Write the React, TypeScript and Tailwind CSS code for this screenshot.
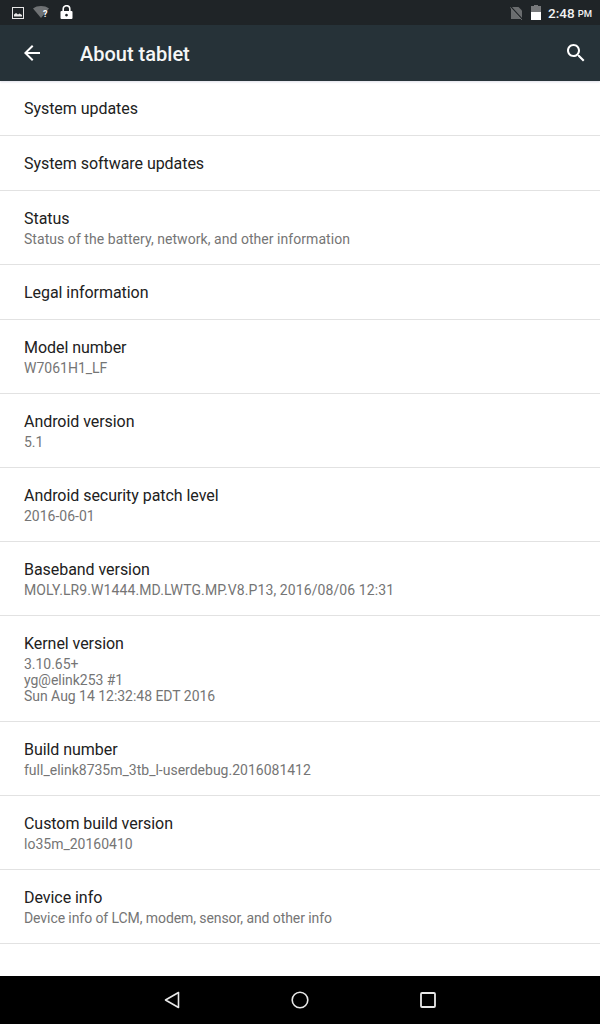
import React from 'react';

const rows: { title: string; sub?: string[]; subClass?: string }[] = [
  { title: 'System updates' },
  { title: 'System software updates' },
  { title: 'Status', sub: ['Status of the battery, network, and other information'], subClass: 'tracking-[0.05px]' },
  { title: 'Legal information' },
  { title: 'Model number', sub: ['W7061H1_LF'] },
  { title: 'Android version', sub: ['5.1'] },
  { title: 'Android security patch level', sub: ['2016-06-01'] },
  { title: 'Baseband version', sub: ['MOLY.LR9.W1444.MD.LWTG.MP.V8.P13, 2016/08/06 12:31'], subClass: 'tracking-[0.1px]' },
  { title: 'Kernel version', sub: ['3.10.65+', 'yg@elink253 #1', 'Sun Aug 14 12:32:48 EDT 2016'], subClass: 'tracking-[-0.03px]' },
  { title: 'Build number', sub: ['full_elink8735m_3tb_l-userdebug.2016081412'] },
  { title: 'Custom build version', sub: ['lo35m_20160410'] },
  { title: 'Device info', sub: ['Device info of LCM, modem, sensor, and other info'], subClass: 'tracking-[-0.08px]' },
];

const StatusBar = () => (
  <div className="h-[25px] bg-[#1f2427] flex items-center pl-3 pr-2 text-white">
    {/* picture notification */}
    <svg width="12" height="12" viewBox="0 0 12 12" className="mr-[9px] mt-[1px]">
      <rect x="0.5" y="0.5" width="11" height="11" fill="none" stroke="#e8e8e8" />
      <path d="M2 9.5 L2 7.5 L4 6 L6 7.5 L7.5 6.5 L10 8 L10 9.5 Z" fill="#e8e8e8" />
    </svg>
    {/* wifi with question mark */}
    <div className="relative w-[18px] h-[14px] mr-[9px]">
      <svg width="16" height="12" viewBox="0 0 16 12" className="absolute left-0 top-0">
        <path d="M0 2.5 C4 -0.8 12 -0.8 16 2.5 L8 12 Z" fill="#6f7274" />
      </svg>
      <span className="absolute left-[10px] top-[3px] text-[9px] leading-[11px] font-bold text-white">?</span>
    </div>
    {/* lock */}
    <svg width="13" height="15" viewBox="0 0 13 15">
      <path d="M3.2 6 V4 a3.3 3.3 0 0 1 6.6 0 V6" fill="none" stroke="#fff" strokeWidth="1.6" />
      <path fillRule="evenodd" d="M1.5 6 H11.5 a1 1 0 0 1 1 1 V13 a1 1 0 0 1 -1 1 H1.5 a1 1 0 0 1 -1 -1 V7 a1 1 0 0 1 1 -1 Z M6.5 8.7 a1.4 1.4 0 1 0 0.01 0 Z" fill="#fff" />
    </svg>
    <div className="flex-1" />
    {/* no sim */}
    <svg width="13" height="14" viewBox="0 0 13 14" className="mr-[8px] mt-[1px]">
      <path d="M1 1 H8.5 L12 4.5 V13 H1 Z" fill="#6a6d6f" />
      <path d="M0.5 0.5 L12.5 13.5" stroke="#1f2427" strokeWidth="1.4" />
      <path d="M0 1.2 L12 14" stroke="#8a8c8e" strokeWidth="0.7" />
    </svg>
    {/* battery */}
    <div className="w-[10px] h-[15px] mr-[7px] flex flex-col items-center">
      <div className="w-[4px] h-[1px] bg-[#77797b]" />
      <div className="w-[10px] h-[6px] bg-[#77797b]" />
      <div className="w-[10px] h-[8px] bg-white" />
    </div>
    <span className="mt-[1px] text-[13.5px] leading-[24px] font-medium text-[#f2f2f2]">2:48</span>
    <span className="ml-[3px] mt-[2px] text-[9.5px] leading-[23px] font-medium text-[#f2f2f2]">PM</span>
  </div>
);

const Row = ({ title, sub, subClass }: { title: string; sub?: string[]; subClass?: string }) => (
  <div className="px-6 pt-[17px] pb-[15px] border-b border-[#e2e2e2]">
    <div className="text-[16px] leading-[22px] tracking-[-0.05px] text-[#212121]">{title}</div>
    {sub && (
      <div className={`mt-[1px] pb-[2px] text-[14px] leading-[16px] text-[#757575] ${subClass ?? ''}`}>
        {sub.map((line) => (
          <div key={line}>{line}</div>
        ))}
      </div>
    )}
  </div>
);

export default function App() {
  return (
    <div className="w-[600px] h-[1024px] flex flex-col bg-white font-['Roboto',sans-serif] overflow-hidden">
      <div className="relative z-10 shadow-[0_1px_2px_rgba(90,90,140,0.2)]">
        <StatusBar />
        <div className="h-[56px] bg-[#263238] flex items-center pl-[20px] pr-[12px] text-white">
          <svg width="24" height="24" viewBox="0 0 24 24" fill="currentColor">
            <path d="M20 11H7.83l5.59-5.59L12 4l-8 8 8 8 1.41-1.41L7.83 13H20v-2z" />
          </svg>
          <div className="ml-[36px] mt-[2px] text-[20px] font-medium leading-[28px] text-[#f5f6f6]">About tablet</div>
          <div className="flex-1" />
          <svg width="24" height="24" viewBox="0 0 24 24" fill="currentColor">
            <path d="M15.5 14h-.79l-.28-.27C15.41 12.59 16 11.11 16 9.5 16 5.91 13.09 3 9.5 3S3 5.91 3 9.5 5.91 16 9.5 16c1.61 0 3.09-.59 4.23-1.57l.27.28v.79l5 4.99L20.49 19l-4.99-5zm-6 0C7.01 14 5 11.99 5 9.5S7.01 5 9.5 5 14 7.01 14 9.5 11.99 14 9.5 14z" />
          </svg>
        </div>
      </div>
      <div className="flex-1 overflow-hidden">
        {rows.map((row) => (
          <Row key={row.title} title={row.title} sub={row.sub} subClass={row.subClass} />
        ))}
      </div>
      <div className="h-[48px] bg-black flex items-center justify-center gap-[108px]">
        <svg width="20" height="20" viewBox="0 0 20 20">
          <path d="M16.5 2.5 V17.5 L3.5 10 Z" fill="none" stroke="#e8e8e8" strokeWidth="1.6" strokeLinejoin="round" />
        </svg>
        <svg width="20" height="20" viewBox="0 0 20 20">
          <circle cx="10" cy="10" r="7.8" fill="none" stroke="#e8e8e8" strokeWidth="1.6" />
        </svg>
        <svg width="20" height="20" viewBox="0 0 20 20">
          <rect x="3" y="3" width="14" height="14" rx="1" fill="none" stroke="#e8e8e8" strokeWidth="1.8" />
        </svg>
      </div>
    </div>
  );
}
